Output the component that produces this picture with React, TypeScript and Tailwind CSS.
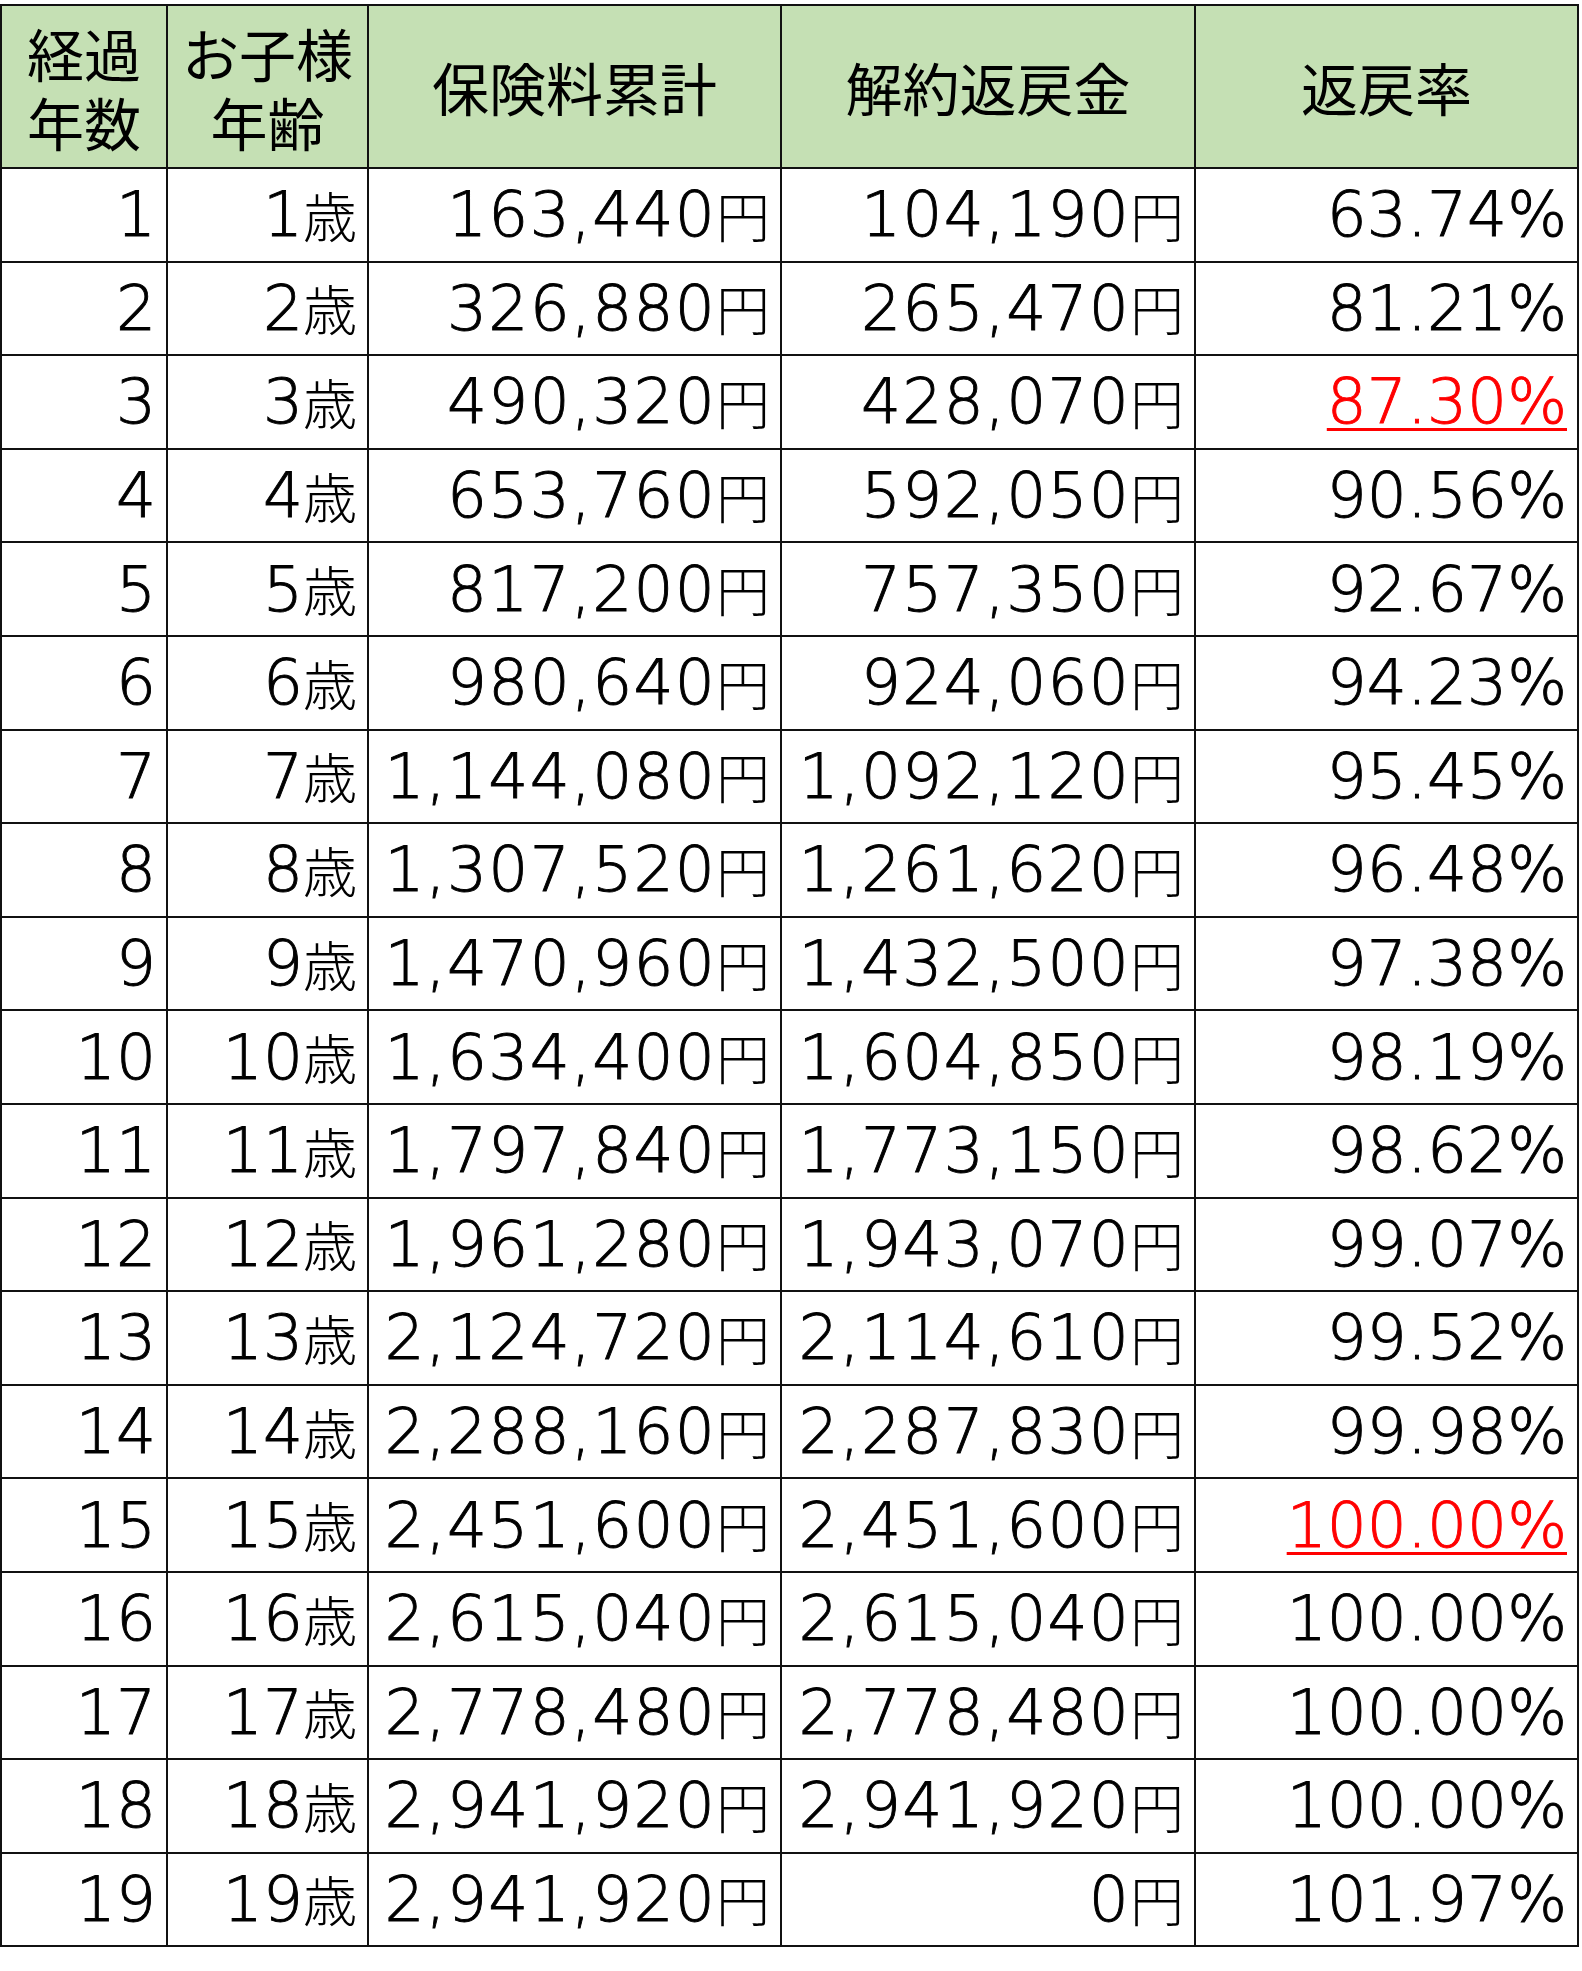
import React from 'react';

type Row = { year: number; paid: string; refund: string; rate: string; hot?: boolean };

const rows: Row[] = [
  { year: 1, paid: '163,440', refund: '104,190', rate: '63.74%' },
  { year: 2, paid: '326,880', refund: '265,470', rate: '81.21%' },
  { year: 3, paid: '490,320', refund: '428,070', rate: '87.30%', hot: true },
  { year: 4, paid: '653,760', refund: '592,050', rate: '90.56%' },
  { year: 5, paid: '817,200', refund: '757,350', rate: '92.67%' },
  { year: 6, paid: '980,640', refund: '924,060', rate: '94.23%' },
  { year: 7, paid: '1,144,080', refund: '1,092,120', rate: '95.45%' },
  { year: 8, paid: '1,307,520', refund: '1,261,620', rate: '96.48%' },
  { year: 9, paid: '1,470,960', refund: '1,432,500', rate: '97.38%' },
  { year: 10, paid: '1,634,400', refund: '1,604,850', rate: '98.19%' },
  { year: 11, paid: '1,797,840', refund: '1,773,150', rate: '98.62%' },
  { year: 12, paid: '1,961,280', refund: '1,943,070', rate: '99.07%' },
  { year: 13, paid: '2,124,720', refund: '2,114,610', rate: '99.52%' },
  { year: 14, paid: '2,288,160', refund: '2,287,830', rate: '99.98%' },
  { year: 15, paid: '2,451,600', refund: '2,451,600', rate: '100.00%', hot: true },
  { year: 16, paid: '2,615,040', refund: '2,615,040', rate: '100.00%' },
  { year: 17, paid: '2,778,480', refund: '2,778,480', rate: '100.00%' },
  { year: 18, paid: '2,941,920', refund: '2,941,920', rate: '100.00%' },
  { year: 19, paid: '2,941,920', refund: '0', rate: '101.97%' },
];

const headCell =
  "bg-[#c5e0b4] flex flex-col items-center justify-center text-center text-[57px] leading-[69px] text-black [font-family:'Noto_Sans_CJK_JP',sans-serif]";
// extralight digits thickened slightly with a stroke to get the medium-light weight of the sheet
const bodyCell =
  "bg-white flex items-center justify-end pr-[10px] text-[63px] leading-none font-extralight text-black whitespace-nowrap [-webkit-text-stroke:0.9px_currentColor] [font-family:'DejaVu_Sans','Noto_Sans_CJK_JP',sans-serif]";
const cjk = "text-[54px] font-light [-webkit-text-stroke:0px] [font-family:'Noto_Sans_CJK_JP',sans-serif]";

export default function App() {
  return (
    <div className="min-h-screen bg-white pt-[4px]">
      <div className="grid w-[1579px] grid-cols-[164px_199px_411px_412px_381px] grid-rows-[161px] auto-rows-[91.6px] gap-[2px] border-2 border-[#111] bg-[#111]">
        <div className={headCell}>
          <div>経過</div>
          <div>年数</div>
        </div>
        <div className={headCell}>
          <div>お子様</div>
          <div>年齢</div>
        </div>
        <div className={headCell}>保険料累計</div>
        <div className={headCell}>解約返戻金</div>
        <div className={headCell}>返戻率</div>

        {rows.map((r) => (
          <React.Fragment key={r.year}>
            <div className={bodyCell}>{r.year}</div>
            <div className={bodyCell}>
              {r.year}
              <span className={cjk}>歳</span>
            </div>
            <div className={bodyCell}>
              <span className="tracking-[1.2px]">{r.paid}</span>
              <span className={cjk}>円</span>
            </div>
            <div className={bodyCell}>
              <span className="tracking-[1.2px]">{r.refund}</span>
              <span className={cjk}>円</span>
            </div>
            <div className={bodyCell}>
              {r.hot ? (
                <span className="text-[#ff0000] underline decoration-[3px] underline-offset-[5px]">{r.rate}</span>
              ) : (
                r.rate
              )}
            </div>
          </React.Fragment>
        ))}
      </div>
    </div>
  );
}
